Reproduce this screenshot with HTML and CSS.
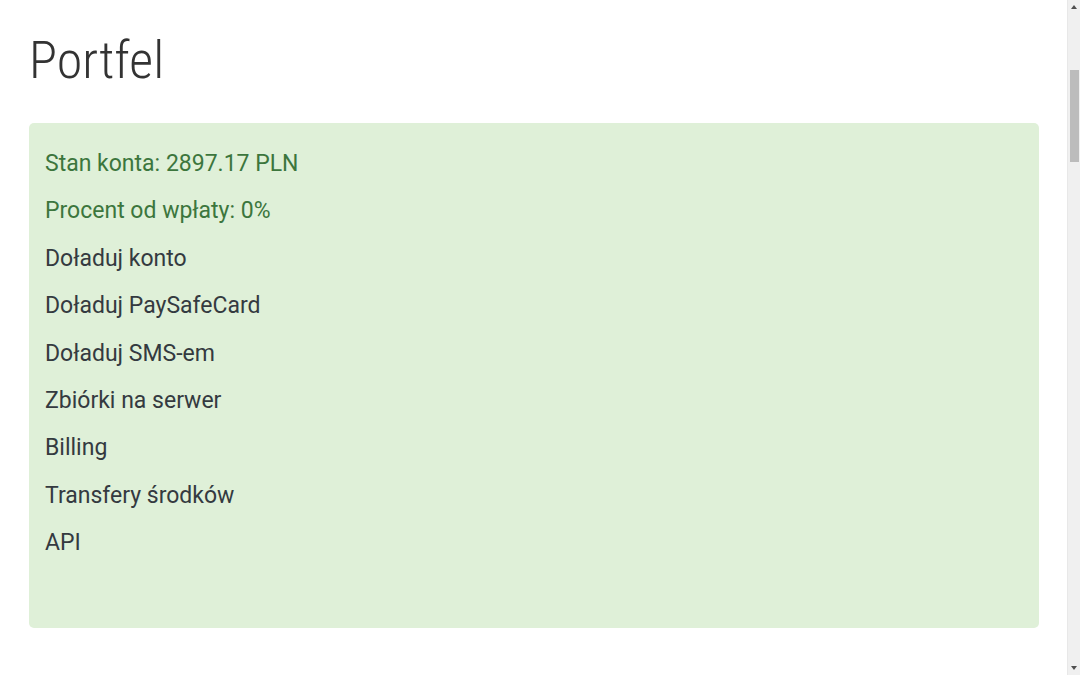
FILE: index.html
```html
<!DOCTYPE html>
<html lang="pl">
<head>
<meta charset="utf-8">
<title>Portfel</title>
<link rel="stylesheet" href="styles.css">
</head>
<body>
<div class="page">
  <h1 class="title">Portfel</h1>
  <div class="wallet">
    <p class="item info">Stan konta: 2897.17 PLN</p>
    <p class="item info">Procent od wpłaty: 0%</p>
    <p class="item">Doładuj konto</p>
    <p class="item">Doładuj PaySafeCard</p>
    <p class="item">Doładuj SMS-em</p>
    <p class="item">Zbiórki na serwer</p>
    <p class="item">Billing</p>
    <p class="item">Transfery środków</p>
    <p class="item">API</p>
  </div>
</div>
<div class="scrollbar">
  <span class="arrow up"></span>
  <span class="thumb"></span>
  <span class="arrow down"></span>
</div>
</body>
</html>
```
FILE: styles.css
```css
html, body {
  margin: 0;
  padding: 0;
  background: #ffffff;
  overflow: hidden;
}
body {
  font-family: Roboto, "Liberation Sans", sans-serif;
  color: #343a40;
  height: 675px;
}
.page {
  width: 1010px;
  padding: 0 29px 0 29px;
}
.title {
  margin: 0 0 28px 0;
  padding-top: 29px;
  height: 95px;
  box-sizing: border-box;
  font-size: 52px;
  font-weight: 300;
  font-stretch: 75%;
  line-height: 64px;
  color: #333333;
}
.wallet {
  background: #dff0d8;
  border-radius: 5px;
  padding: 27px 16px 52px 16px;
  height: 505px;
  box-sizing: border-box;
}
.item {
  margin: 0 0 18.6px 0;
  font-size: 23px;
  line-height: 28.8px;
  font-stretch: 96%;
}
.info {
  color: #3c763d;
}
.scrollbar {
  position: fixed;
  top: 0;
  right: 0;
  width: 13px;
  height: 675px;
  background: #f0f0f0;
  border-left: 1px solid #e8e8e8;
  box-sizing: border-box;
}
.thumb {
  position: absolute;
  left: 2px;
  top: 70px;
  width: 9px;
  height: 92px;
  background: #bcbcbc;
}
.arrow {
  position: absolute;
  left: 3px;
  width: 0;
  height: 0;
  border-left: 3.5px solid transparent;
  border-right: 3.5px solid transparent;
}
.up {
  top: 5px;
  border-bottom: 4px solid #505050;
}
.down {
  bottom: 5px;
  border-top: 4px solid #505050;
}
```
